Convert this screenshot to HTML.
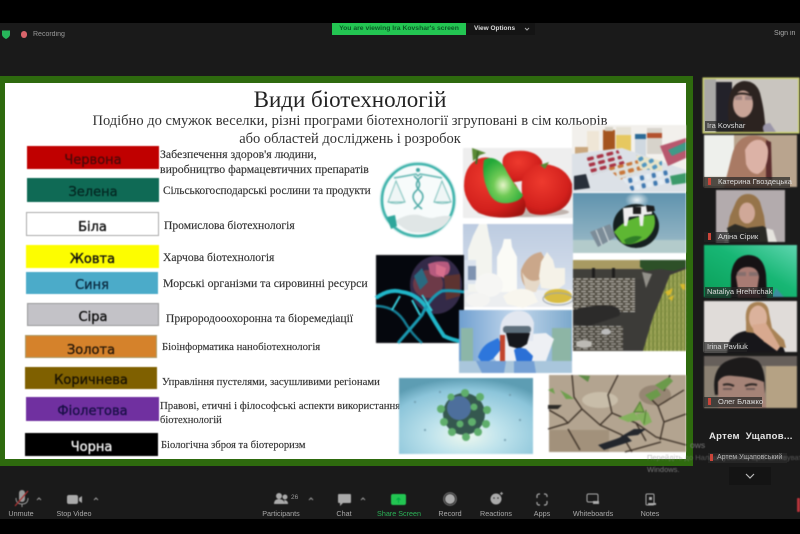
<!DOCTYPE html>
<html><head><meta charset="utf-8"><style>
html,body{margin:0;padding:0;background:#1a1a1a}
#p{position:relative;width:800px;height:534px;overflow:hidden;background:#1a1a1a;font-family:"Liberation Sans",sans-serif}
#p div{position:absolute;white-space:nowrap;box-sizing:border-box}
.l{font-family:"DejaVu Sans","Liberation Sans",sans-serif;font-size:13px;text-align:center;color:#111;filter:blur(.4px);-webkit-text-stroke:.35px currentColor}
.t{font-family:"Liberation Serif",serif;font-size:11px;color:#333;filter:blur(.35px);line-height:15px;-webkit-text-stroke:.15px #333}
.n{color:#ddd;font-size:7.5px;background:rgba(35,35,35,.7);height:10px;line-height:10px;padding:0 2px;filter:blur(.35px)}
.b{color:#a9a9a9;font-size:7.2px;text-align:center;transform:translateX(-50%);filter:blur(.35px)}
</style></head><body><div id="p">
<div style="left:0;top:0;width:800px;height:23px;background:#000"></div>
<div style="left:0;top:519px;width:800px;height:15px;background:#000"></div>
<div style="left:332px;top:23px;width:134px;height:12px;background:#23c552;color:#0b5a26;font-size:6.8px;line-height:12px;text-align:center;font-weight:bold;filter:blur(.3px)">You are viewing Ira Kovshar's screen</div>
<div style="left:466px;top:23px;width:69px;height:12px;background:#141414;color:#ddd;font-size:6.5px;line-height:12px;padding-left:8px;font-weight:bold;filter:blur(.3px)">View Options</div>
<svg style="position:absolute;left:523px;top:26px" width="8" height="6"><path d="M2 2l2 2 2-2" stroke="#aaa" fill="none"/></svg>
<svg style="position:absolute;left:1px;top:29px" width="10" height="11"><path d="M1 1.500h8v4c0 2-2 3.500-4 4.500-2-1-4-2.500-4-4.500z" fill="#27b55a"/></svg>
<div style="left:21px;top:31px;width:6px;height:7px;border-radius:3px;background:#d8646a"></div>
<div style="left:33px;top:30px;color:#999;font-size:7px;line-height:9px;filter:blur(.3px)">Recording</div>
<div style="left:774px;top:29px;color:#aaa;font-size:7px;line-height:10px;filter:blur(.3px)">Sign in</div>

<div style="left:0;top:76px;width:693px;height:390px;background:#2e6a0e"></div>
<div style="left:5px;top:83px;width:681px;height:376px;background:#fff"></div>
<div style="left:150px;top:87px;width:400px;text-align:center;font:23px/26px 'Liberation Serif',serif;color:#222;filter:blur(.35px)">Види біотехнологій</div>
<div style="left:50px;top:112px;width:600px;text-align:center;font:14.5px/18px 'Liberation Serif',serif;color:#333;filter:blur(.35px)">Подібно до смужок веселки, різні програми біотехнології згруповані в сім кольорів</div>
<div style="left:50px;top:130px;width:600px;text-align:center;font:14.5px/18px 'Liberation Serif',serif;color:#333;filter:blur(.35px)">або областей досліджень і розробок</div>

<div class="l" style="left:27px;top:146px;width:132px;height:23px;line-height:29px;background:#c00000;color:#4f0808">Червона</div>
<div class="l" style="left:27px;top:178px;width:132px;height:24px;line-height:30px;background:#0f6a55;color:#052a24">Зелена</div>
<div class="l" style="left:26px;top:212px;width:133px;height:24px;line-height:29px;background:#fff;border:1px solid #aaa">Біла</div>
<div class="l" style="left:26px;top:245px;width:133px;height:23px;line-height:29px;background:#fdfd00">Жовта</div>
<div class="l" style="left:26px;top:272px;width:132px;height:22px;line-height:27px;background:#4babc9;color:#0d2f45">Синя</div>
<div class="l" style="left:27px;top:303px;width:132px;height:23px;line-height:28px;background:#c3c2c7;border:1px solid #999">Сіра</div>
<div class="l" style="left:25px;top:335px;width:132px;height:23px;line-height:29px;background:#d5822b;color:#2a1a0a;border:1px solid #a96">Золота</div>
<div class="l" style="left:25px;top:367px;width:132px;height:22px;line-height:27px;background:#7f6000;color:#1c1503">Коричнева</div>
<div class="l" style="left:26px;top:397px;width:133px;height:24px;line-height:30px;background:#7030a0;color:#1b1048">Фіолетова</div>
<div class="l" style="left:25px;top:433px;width:133px;height:23px;line-height:29px;background:#000;color:#eee">Чорна</div>

<div class="t" style="left:160px;top:147px;font-size:11.8px">Забезпечення здоров'я людини,</div>
<div class="t" style="left:160px;top:162px;font-size:11.8px">виробництво фармацевтичних препаратів</div>
<div class="t" style="left:163px;top:184px;font-size:11.3px">Сільськогосподарські рослини та продукти</div>
<div class="t" style="left:164px;top:218px;font-size:11.6px">Промислова біотехнологія</div>
<div class="t" style="left:163px;top:250px;font-size:11.6px">Харчова біотехнологія</div>
<div class="t" style="left:163px;top:276px;font-size:11.8px">Морські організми та сировинні ресурси</div>
<div class="t" style="left:166px;top:312px;font-size:11.55px">Прирородооохоронна та біоремедіації</div>
<div class="t" style="left:162px;top:340px;font-size:10.7px">Біоінформатика нанобіотехнологія</div>
<div class="t" style="left:162px;top:375px;font-size:10.7px">Управління пустелями, засушливими регіонами</div>
<div class="t" style="left:160px;top:399px;font-size:10.8px">Правові, етичні і філософські аспекти використання</div>
<div class="t" style="left:160px;top:413px;font-size:10.5px">біотехнологій</div>
<div class="t" style="left:161px;top:438px;font-size:10.55px">Біологічна зброя та біотероризм</div>

<svg style="position:absolute;left:0;top:0;filter:blur(.8px)" width="800" height="534" viewBox="0 0 800 534">
<defs>
<linearGradient id="g1" x1="0" y1="1" x2="1" y2="0"><stop offset="0" stop-color="#0a9e58"/><stop offset=".55" stop-color="#17b674"/><stop offset="1" stop-color="#5fd6b0"/></linearGradient>
<radialGradient id="v" cx=".5" cy=".75" r=".75"><stop offset="0" stop-color="#eef8ee"/><stop offset=".35" stop-color="#bfe3ec"/><stop offset=".8" stop-color="#8cc5da"/><stop offset="1" stop-color="#5d9db3"/></radialGradient>
<linearGradient id="m" x1="0" y1="0" x2="0" y2="1"><stop offset="0" stop-color="#bccbe0"/><stop offset="1" stop-color="#dfe6f0"/></linearGradient>
<linearGradient id="bl" x1="0" y1="0" x2="0" y2="1"><stop offset="0" stop-color="#5f93ae"/><stop offset=".75" stop-color="#8fb2c2"/><stop offset="1" stop-color="#a8c4c8"/></linearGradient>
<linearGradient id="lab" x1="0" y1="0" x2="1" y2="0"><stop offset="0" stop-color="#6f9fd0"/><stop offset=".5" stop-color="#c4d8ec"/><stop offset="1" stop-color="#7ba8cc"/></linearGradient>
<radialGradient id="sb" cx=".4" cy=".35" r=".75"><stop offset="0" stop-color="#ee3a2e"/><stop offset=".7" stop-color="#d2201c"/><stop offset="1" stop-color="#a31310"/></radialGradient>
<radialGradient id="kw" cx=".5" cy=".6" r=".6"><stop offset="0" stop-color="#e6f5c8"/><stop offset=".4" stop-color="#6fca55"/><stop offset="1" stop-color="#22a838"/></radialGradient>
<radialGradient id="glow" cx=".5" cy=".5" r=".5"><stop offset="0" stop-color="#fff" stop-opacity=".9"/><stop offset="1" stop-color="#fff" stop-opacity="0"/></radialGradient>
<pattern id="pl" width="12" height="8" patternUnits="userSpaceOnUse" patternTransform="rotate(-12)"><rect width="12" height="8" fill="#dfe5ec"/><rect x="1" y="1" width="4" height="5" rx="1.500" fill="#3f78b0"/><rect x="7" y="1" width="4" height="5" rx="1.500" fill="#e6eef4"/></pattern>
<pattern id="pr" width="10" height="6" patternUnits="userSpaceOnUse" patternTransform="rotate(-14)"><rect width="10" height="6" fill="#d6dbe0"/><rect x="1" y="1" width="7" height="3.500" rx="1.500" fill="#a83244"/></pattern>
<pattern id="po" width="9" height="7" patternUnits="userSpaceOnUse" patternTransform="rotate(-14)"><rect width="9" height="7" fill="#dde0dc"/><rect x="1" y="1" width="6" height="4" rx="1.500" fill="#c9773a"/></pattern>
<pattern id="py" width="8" height="7" patternUnits="userSpaceOnUse" patternTransform="rotate(-30)"><rect width="8" height="7" fill="#e8e4c8"/><rect x="1" y="1" width="5" height="4" rx="1.500" fill="#4f95c0"/></pattern>
<pattern id="st" width="7" height="5" patternUnits="userSpaceOnUse"><rect width="7" height="5" fill="#4f4a40"/><path d="M0 1.500h5M2 4h5" stroke="#cfcdc6" stroke-width=".9"/></pattern>
<pattern id="gr" width="4" height="6" patternUnits="userSpaceOnUse"><rect width="4" height="6" fill="#8f9a4c"/><path d="M1 0l.6 6" stroke="#6d7e35" stroke-width="1"/><path d="M3 0l-.4 5" stroke="#b3b668" stroke-width=".7"/></pattern>
</defs>
<!-- logo -->
<circle cx="418" cy="200" r="38.500" fill="#d6efee"/>
<circle cx="418" cy="200" r="36" fill="#f7fbfb" stroke="#3fb3ab" stroke-width="2.600"/>
<path d="M394 178q12-2 22-4l2 2 2-2q12 2 22 4" fill="none" stroke="#5fb5b0" stroke-width="1.500"/>
<path d="M396 181l-8 21h17zM442 181l-8 21h17z" fill="#eff6f6" stroke="#7cc0bb" stroke-width="1"/>
<path d="M388 202q8 3 17 0M434 202q8 3 17 0" stroke="#7cc0bb" fill="none"/>
<circle cx="418" cy="170" r="2" fill="#3fa5a0"/>
<path d="M414 176q10 8 2 15t6 18M422 176q-10 8-2 15t-6 18" fill="none" stroke="#48a7a3" stroke-width="1.500"/>
<path d="M395 221q12-8 24-6 8 3 14 3 10-3 18-2-4 10-14 14-14 4-26 2-8-3-16-11z" fill="#e0e6e6"/>
<path d="M387 217l8-2 2 11-6 3z" fill="#2ea69b"/>
<!-- strawberry -->
<rect x="463" y="148" width="110" height="70" fill="#eeeeee"/>
<ellipse cx="523" cy="212" rx="46" ry="5" fill="#bfb3ae"/>
<path d="M503 166q-3-13 12-15 20-2 27 10 2 12-8 18l-25 4z" fill="url(#sb)"/>
<path d="M522 180q4-16 22-16 22 2 28 20 2 18-12 26-16 8-30 3-10-10-8-33z" fill="url(#sb)"/>
<path d="M464 186q0-20 14-27 10-4 18 2l20 24 9 16q2 10-3 14-12 4-28 2-18-2-24-13-6-9-6-18z" fill="url(#sb)"/>
<path d="M484 160q6-4 13 0 6 3 10 12 8 14 16 23-2 6-14 8-14 2-20-10-8-16-5-33z" fill="url(#kw)"/>
<path d="M472 148l1 13 7-6 6-2z" fill="#5a8a34"/><path d="M478 151l-2 13" stroke="#3f6d28" stroke-width="2"/>
<path d="M540 165l9-3-4 7z" fill="#5a8a34"/>
<!-- pills -->
<rect x="572" y="125" width="114" height="67" fill="#f2f0ec"/>
<rect x="587" y="131" width="12" height="20" fill="#efe6d6"/><rect x="575" y="147" width="13" height="8" fill="#c9a77e"/>
<rect x="603" y="130" width="12" height="22" fill="#a4541e"/><rect x="605" y="127" width="8" height="4" fill="#d6d1c5"/>
<rect x="616" y="127" width="15" height="26" fill="#e6c860"/><rect x="616" y="127" width="15" height="8" fill="#e6e2d6"/>
<rect x="635" y="134" width="11" height="22" fill="#cfd8e0"/><rect x="635" y="134" width="11" height="5" fill="#2b6a96"/>
<rect x="647" y="128" width="15" height="26" fill="#d7d3cb"/><rect x="647" y="133" width="15" height="5" fill="#b3512e"/>
<path d="M572 154l50-6 64 22v22H572z" fill="#dce1e7"/>
<path d="M586 156l32-6 8 16-34 9z" fill="url(#pr)"/>
<path d="M608 168l30-8 12 8-30 12z" fill="url(#po)"/>
<path d="M622 178l46-8 8 12-44 9z" fill="url(#pl)"/>
<path d="M636 155l26 6 0 10-22-2z" fill="url(#py)"/>
<path d="M660 146l26-8v20l-18 8z" fill="#b8586e"/><path d="M668 150l18-8v8l-14 6z" fill="#3f9a88"/>
<path d="M670 176l16-3v10l-14 2z" fill="#3c9a6a"/><path d="M574 176l12-2 4 14-16 2z" fill="#282f3a"/>
<!-- bulb -->
<rect x="573" y="193" width="113" height="60" fill="url(#bl)"/>
<rect x="573" y="240" width="113" height="13" fill="#b3cbcb"/>
<ellipse cx="637" cy="200" rx="12" ry="8" fill="url(#glow)"/>
<path d="M590 232l20-8 6 13-18 10z" fill="#7c8c98"/><path d="M596 230l6 15M603 227l6 15" stroke="#cdd6da" stroke-width="1.200"/>
<ellipse cx="636" cy="226" rx="23" ry="22" fill="#151f20"/>
<path d="M614 232q12-16 40-17 4 14-8 24-16 8-24 4z" fill="#5eb733"/>
<path d="M624 240q10-6 18-3-8 8-16 7z" fill="#2f7d27"/>
<path d="M623 208l23-2 6 1v7l-8 1-1 11-3 0-1-10-10 1-2 9-3 0z" fill="#eeeeee"/><path d="M633 207h8v7h-8zM646 205l8 1 1 5-8 1z" fill="#1c1c1c"/>
<!-- milk -->
<rect x="463" y="224" width="110" height="83" fill="url(#m)"/>
<rect x="463" y="290" width="110" height="17" fill="#eceef0"/>
<path d="M479 224h8l2 12 3 12v44h-24v-42l5-14z" fill="#f3f4ef"/>
<path d="M504 239h7l1 8 5 10v35h-20v-35l5-10z" fill="#fbfbf6"/>
<rect x="464" y="260" width="12" height="24" fill="#dbe3ee"/><rect x="468" y="266" width="8" height="14" fill="#7f93b0"/>
<ellipse cx="489" cy="285" rx="14" ry="12" fill="#f6f6f4"/>
<path d="M521 270q6-16 20-18l6 10-3 18-16 10q-8-8-7-20z" fill="#caa78a"/>
<path d="M522 272q8 14 20 6l-6 14h-10z" fill="#e6d9c8"/>
<path d="M541 262l6-10 6 8 2 8h10v16l-8 6-16-2-2-12z" fill="#f5f2e8"/>
<path d="M503 296q16-12 30-4l5 10-15 6-16-4z" fill="#f8f6ee"/>
<ellipse cx="558" cy="296" rx="14" ry="7" fill="#d8bc42"/><ellipse cx="558" cy="299" rx="15" ry="6" fill="none" stroke="#9aa3ad"/>
<ellipse cx="478" cy="300" rx="12" ry="7" fill="#f4f4f2"/>
<!-- dry land -->
<rect x="573" y="260" width="113" height="91" fill="#3c3b38"/>
<rect x="573" y="260" width="70" height="9" fill="#a89a62"/>
<rect x="573" y="269" width="70" height="10" fill="#403f3a"/>
<path d="M592 268h3v10h-3zM612 268h3v12h-3z" fill="#1e1d1c"/>
<rect x="573" y="278" width="62" height="34" fill="url(#st)"/>
<path d="M573 310q20-6 40-4 10 3 6 10l-30 10-16-2z" fill="#2c2b2a"/>
<rect x="573" y="326" width="50" height="25" fill="url(#st)" opacity=".85"/>
<ellipse cx="606" cy="332" rx="5" ry="3" fill="#bbb"/><ellipse cx="584" cy="344" rx="8" ry="4" fill="#bcbab4"/>
<path d="M643 351l10-34 9-22 8-20 16-6v82z" fill="url(#gr)"/>
<path d="M640 260h46v7l-12 4-14-2-14 2-6-4z" fill="#2d5028"/>
<path d="M642 272l10 2-6 14z" fill="#e7e6da" opacity=".5"/>
<path d="M665 292l8-4-2 6-3 2zM680 284l5 0v6l-3-1zM668 298l6-3-2 6z" fill="#d8b92c"/>
<!-- dna -->
<rect x="376" y="255" width="88" height="88" fill="#05070d"/>
<ellipse cx="436" cy="285" rx="26" ry="29" fill="#332a48"/>
<ellipse cx="428" cy="284" rx="15" ry="14" fill="#6d3a48"/>
<path d="M428 264q10-4 20-2 4 6 0 12-10 6-18 0z" fill="#b65a7e"/>
<path d="M436 264l10 4-2 10-8-4z" fill="#d76f8d"/>
<path d="M444 276l16-2 0 22-14 4z" fill="#5d3330"/>
<path d="M414 276l8-8 6 14-8 8z" fill="#2a6a80"/>
<path d="M376 298q14-10 26-6 16 2 26 18 8 14 16 26 8 4 20 6" fill="none" stroke="#20b6c9" stroke-width="4"/>
<path d="M376 306q20 0 30 18 6 10 16 19" fill="none" stroke="#157f96" stroke-width="2.500"/>
<path d="M398 343q14-16 24-28 8-18 20-24 8-1 22 1" fill="none" stroke="#1a9ab2" stroke-width="3"/>
<path d="M412 300l8 15M422 295l10 16M400 296l-8 14" stroke="#38cbd8" stroke-width="2"/>
<!-- lab -->
<rect x="459" y="310" width="113" height="63" fill="url(#lab)"/>
<rect x="461" y="328" width="12" height="34" fill="#8cb6a8"/><rect x="552" y="328" width="19" height="34" fill="#8db5a5"/>
<path d="M492 355q2-16 24-20l30-2 8 6-8 22h-50z" fill="#eef0f4"/>
<path d="M500 332q0-18 16-21 14-2 18 12l-1 18-33 0z" fill="#e2e7f0"/>
<rect x="503" y="326" width="28" height="7" rx="3" fill="#5e6f7c"/>
<path d="M506 333h24l-3 11-8 5-10-3z" fill="#16171b"/>
<path d="M478 357q4-12 14-16l6-3 5 9-10 12-10 5z" fill="#2d76dc"/>
<path d="M514 350q4-4 12-1l7 7-2 8-14 0z" fill="#2b70d6"/>
<rect x="500" y="335" width="5" height="38" fill="#c2452c"/>
<rect x="459" y="361" width="113" height="12" fill="#a9c6dc"/>
<path d="M476 361l30 0-2 12-22 0zM514 361l20 0 2 12-22 0z" fill="#5d8fd0" opacity=".7"/>
<!-- virus -->
<rect x="399" y="378" width="134" height="76" fill="url(#v)"/>
<circle cx="464" cy="414" r="21" fill="#35584f"/>
<circle cx="459" cy="408" r="12" fill="#4d6f9c"/>
<g fill="#5fae6c"><circle cx="465" cy="393" r="4"/><circle cx="480" cy="397" r="4"/><circle cx="487" cy="410" r="4"/><circle cx="486" cy="424" r="4"/><circle cx="478" cy="432" r="4"/><circle cx="466" cy="437" r="4"/><circle cx="452" cy="432" r="4"/><circle cx="444" cy="422" r="4"/><circle cx="441" cy="409" r="4"/><circle cx="451" cy="397" r="3.500"/><circle cx="472" cy="422" r="4"/><circle cx="474" cy="407" r="3.500"/><circle cx="460" cy="424" r="3.500"/></g>
<g fill="#6e97a8"><circle cx="415" cy="402" r="1"/><circle cx="425" cy="430" r="1"/><circle cx="440" cy="392" r="1"/><circle cx="510" cy="395" r="1"/><circle cx="505" cy="440" r="1"/><circle cx="520" cy="420" r="1"/></g>
<!-- soil -->
<rect x="549" y="375" width="137" height="77" fill="#b3a490"/>
<rect x="549" y="430" width="60" height="22" fill="#a2917b"/>
<ellipse cx="600" cy="400" rx="18" ry="8" fill="#c8bda9"/><ellipse cx="655" cy="395" rx="16" ry="10" fill="#968673"/>
<path d="M572 375l2 22 8 12-14 14-20 6M582 409l18 16 22 10 10 17M600 425l12-12 24 10 20 14 30 8M612 413l-4-18 10-20M636 423l10 18M660 440l4-18 22-8M664 422l-6-16-8-8M658 406l26-16M549 410l14 8 5 5M568 429l12 21M670 375l-6 16M625 452l36-10" fill="none" stroke="#3a2f25" stroke-width="1.300"/>
<path d="M598 445l18-6 10-4 6 6-12 4-16 5zM620 437l14-8h12l-8 6z" fill="#23262c"/>
<path d="M553 388l-5 2 7 4zM560 390l9 5 5 4-8 0z" fill="#6fa04e"/>
<path d="M578 375l12 1-2 6z" fill="#5f8c46"/><path d="M548 405h14l-4 4h-10z" fill="#2c2a27"/>
<path d="M618 418l16-6 6 8-12 2zM636 414l12-2 4 10-8 4z" fill="#83b15c"/><path d="M634 412l6-10 4 10zM644 424l2-14" stroke="#4f7f30" fill="#7ea84f"/>
<path d="M645 395l12-6 4 6-10 6zM655 385l14-8 4 4-10 10z" fill="#6b9a4a"/>
<!-- thumbs -->
<rect x="702.500" y="77.500" width="97" height="56" fill="#cfd56f"/>
<rect x="704" y="79" width="94" height="53" fill="#c9c5bf"/>
<rect x="704" y="79" width="12" height="53" fill="#a9a8a6"/>
<rect x="716" y="82" width="16" height="50" fill="#23222a"/>
<path d="M730 132q-4-24 0-38 4-12 14-13 12 0 16 12 3 12 4 20l2 19z" fill="#2c2320"/>
<ellipse cx="743" cy="104" rx="10" ry="13.500" fill="#c9a497"/>
<path d="M733 96q8-5 20 0" stroke="#2c2320" stroke-width="2" fill="none"/>
<rect x="735" y="96" width="7" height="4" fill="#8e7676" opacity=".7"/><rect x="745" y="96" width="7" height="4" fill="#8e7676" opacity=".7"/>
<path d="M764 132q-4-8 6-9l6 9z" fill="#9a95a8"/>
<rect x="704" y="135" width="93" height="52" fill="#b9a48e"/>
<rect x="704" y="135" width="30" height="42" fill="#eef0ec"/>
<path d="M724 187l8-32q4-16 16-19 12-2 20 4l3 16 0 31z" fill="#a97a64"/>
<path d="M766 140l5 2 1 38-6-2z" fill="#5c2d2e"/>
<path d="M745 150q6-12 16-10 8 4 7 14-1 16-10 20-8 0-12-10z" fill="#dcb2a6"/>
<rect x="716" y="190" width="69" height="52" fill="#b3abad"/>
<path d="M727 232l3-16 6-14q4-8 12-8t12 8l4 14 2 16z" fill="#96744a"/>
<path d="M724 242l3-14 8-4 12 4 16-2 7 4 3 12z" fill="#2b2a25"/>
<path d="M766 228l7 2 4 12h-9zM727 228l-3 14h5z" fill="#e6e3de"/>
<ellipse cx="747" cy="213" rx="8" ry="10.500" fill="#d0a898"/>
<rect x="704" y="245" width="93" height="52" fill="url(#g1)"/>
<path d="M731 297v-22q2-19 17-20 16 0 18 20l1 22z" fill="#161214"/>
<path d="M738 297v-8l-2-12q2-10 12-10t11 10l-2 14v6z" fill="#a87b73"/>
<path d="M737 272h9v4h-9zM749 272h9v4h-9z" fill="#7d6c6b" opacity=".8"/>
<path d="M738 297l4-6 12 0 8 6z" fill="#5c2e34"/><path d="M772 297l4-9 8 9z" fill="#3e8ea0"/>
<rect x="704" y="301" width="93" height="51" fill="#e0dcd9"/>
<path d="M727 352l3-12q6-8 16-9l12-2 14 6 8 4 5 13z" fill="#17161a"/>
<path d="M746 322q-2-18 10-20 12-1 13 11l3 15 12 12 2 8-10-2-12-4-4-8-14-2z" fill="#a98356"/>
<ellipse cx="758" cy="318" rx="9" ry="12.500" fill="#dbb29c"/>
<path d="M752 325l14-2 6 10 8 14-3 4-11-8-12-10z" fill="#d8a98f"/>
<rect x="704" y="356" width="93" height="52" fill="#8a8072"/>
<rect x="704" y="356" width="93" height="10" fill="#665f5a"/>
<rect x="766" y="366" width="31" height="42" fill="#b5a284"/>
<path d="M715 395q-4-24 10-33 18-9 33-1 8 8 7 32z" fill="#1c1a1a"/>
<path d="M718 408l0-26q4-8 16-6 18 1 30 6l2 26z" fill="#a58377"/>
<path d="M723 385q5-2 11 1M745 386q6-3 12-1" stroke="#2a2422" stroke-width="2" fill="none"/>
<path d="M723 389h9M746 389h9" stroke="#60504e" stroke-width="1.500"/>
</svg>

<div class="n" style="left:705px;top:121px;width:38px">Ira Kovshar</div>
<div class="n" style="left:704px;top:177px;width:86px;padding-left:14px">Катерина Гвоздецька</div>
<div class="n" style="left:704px;top:232px;width:56px;padding-left:14px">Аліна Сірик</div>
<div class="n" style="left:705px;top:287px;width:68px">Nataliya Hrehirchak</div>
<div class="n" style="left:704px;top:342px;width:43px;padding-left:3px">Irina Pavliuk</div>
<div class="n" style="left:704px;top:397px;width:58px;padding-left:14px">Олег Блажко</div>
<div style="left:709px;top:431px;color:#e6e6e6;font-size:9.5px;font-weight:bold;line-height:12px;letter-spacing:.3px;filter:blur(.3px)">Артем&nbsp; Ущапов...</div>
<div class="n" style="left:708px;top:453px;width:79px;padding-left:9px;color:#bbb;font-size:7px;background:#262626">Артем Ущаповський</div>
<div style="left:647px;top:453px;color:#888;font-size:7.5px;opacity:.55;line-height:10px;filter:blur(.4px)">Перейдіть до Налаштування, щоб активувати</div>
<div style="left:647px;top:465px;color:#777;font-size:7.5px;line-height:10px;filter:blur(.4px)">Windows.</div>
<div style="left:690px;top:440px;color:#777;font-size:8.5px;line-height:10px;filter:blur(.4px)">ows</div>
<svg style="position:absolute;left:706px;top:0" width="10" height="534"><g fill="#c9453a"><rect x="2" y="178" width="3" height="7"/><rect x="2" y="233" width="3" height="7"/><rect x="2" y="398" width="3" height="7"/><rect x="4" y="454" width="3" height="7"/></g></svg>
<div style="left:729px;top:467px;width:42px;height:18px;background:#141414"></div>
<svg style="position:absolute;left:744px;top:472px" width="12" height="8"><path d="M2 2l4 4 4-4" stroke="#bbb" stroke-width="1.200" fill="none"/></svg>

<svg style="position:absolute;left:0;top:484px;filter:blur(.5px)" width="800" height="35" viewBox="0 484 800 35">
<path d="M19 493a3 3 0 0 1 6 0v6a3 3 0 0 1-6 0z" fill="#999"/><path d="M16 498q0 6 6 6t6-6M22 504v3" stroke="#999" fill="none"/><path d="M15 506l13-15" stroke="#a33" stroke-width="1.300"/>
<rect x="67" y="495" width="11" height="9" rx="2" fill="#aaa"/><path d="M79 498l3-2v7l-3-2z" fill="#aaa"/>
<path d="M37 500l2-2 2 2M94 500l2-2 2 2M309 500l2-2 2 2M361 500l2-2 2 2" stroke="#999" fill="none"/>
<circle cx="279" cy="496" r="3" fill="#aaa"/><circle cx="285" cy="497" r="2.500" fill="#aaa"/><path d="M274 504q0-5 5-5t6 5zM285 504h3q0-4-4-4z" fill="#aaa"/>
<path d="M339 494h11a1 1 0 0 1 1 1v7a1 1 0 0 1-1 1h-7l-3 3v-3h-1a1 1 0 0 1-1-1v-7a1 1 0 0 1 1-1z" fill="#aaa"/>
<rect x="391" y="494" width="15" height="11" rx="2" fill="#23c552"/><path d="M398.500 503v-5M396.500 500l2-2 2 2" stroke="#0a4" fill="none"/>
<circle cx="450" cy="499" r="5" fill="#aaa"/><circle cx="450" cy="499" r="6.300" fill="none" stroke="#777"/>
<circle cx="496" cy="499" r="5.500" fill="#aaa"/><circle cx="494" cy="498" r=".8" fill="#333"/><circle cx="498" cy="498" r=".8" fill="#333"/><path d="M501.500 492v3M500 493.500h3" stroke="#aaa"/>
<path d="M537 498v-2a2 2 0 0 1 2-2h1M544 494h1a2 2 0 0 1 2 2v1M547 501v2a2 2 0 0 1-2 2h-1M540 505h-1a2 2 0 0 1-2-2v-1" stroke="#aaa" fill="none" stroke-width="1.200"/>
<rect x="587" y="494" width="11" height="8" rx="1.500" stroke="#aaa" fill="none"/><rect x="593" y="501" width="6" height="3" fill="#aaa"/>
<rect x="646" y="494" width="8" height="11" rx="1" stroke="#aaa" fill="none"/><rect x="649" y="497" width="3" height="3" fill="#aaa"/><rect x="648" y="503" width="8" height="2" fill="#aaa"/>
<rect x="797" y="498" width="3" height="14" rx="1" fill="#b5333a"/>
</svg>
<div style="left:291px;top:494px;color:#999;font-size:6.5px;line-height:8px">26</div>
<div class="b" style="left:21px;top:509px">Unmute</div>
<div class="b" style="left:74px;top:509px">Stop Video</div>
<div class="b" style="left:281px;top:509px">Participants</div>
<div class="b" style="left:344px;top:509px">Chat</div>
<div class="b" style="left:399px;top:509px;color:#2bb257">Share Screen</div>
<div class="b" style="left:450px;top:509px">Record</div>
<div class="b" style="left:496px;top:509px">Reactions</div>
<div class="b" style="left:542px;top:509px">Apps</div>
<div class="b" style="left:593px;top:509px">Whiteboards</div>
<div class="b" style="left:650px;top:509px">Notes</div>
</div></body></html>
